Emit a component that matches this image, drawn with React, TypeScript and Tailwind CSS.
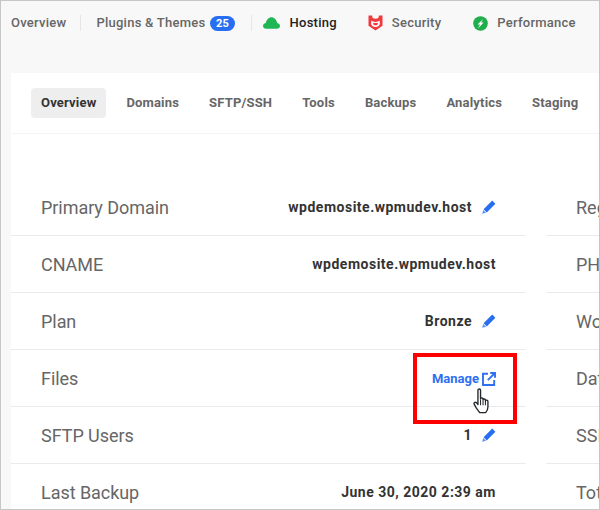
const Pencil = () => (
  <svg viewBox="0 0 14 14" className="ml-[10px] h-[14px] w-[14px] shrink-0">
    <path d="M10.2.6 13.4 3.800 4.800 12.400 1.600 9.200Z" fill="#286ef1" />
    <path d="M1.200 10 4 12.800 .2 13.800Z" fill="#5b8ff5" />
  </svg>
);

const Shield = () => (
  <svg viewBox="0 0 15 16" className="h-[16px] w-[15px] shrink-0">
    <path
      d="M.5.500h3.600l.4 2.300c.8.700 1.800 1 3 1s2.200-.3 3-1L10.900.500h3.600v10.300L7.500 15.500.5 10.800Z"
      fill="#f0383f"
    />
    <path
      d="M3.200 5.500c1.300 1 2.800 1.400 4.300 1.400s3-.4 4.300-1.400v3.600c0 1.500-2 2.900-4.300 2.900s-4.300-1.400-4.300-2.900Z"
      fill="#fff"
    />
    <path d="M5.200 7.800c1.500.4 3.100.4 4.600 0v1.200c0 .7-1 1.300-2.300 1.300s-2.300-.6-2.300-1.300Z" fill="#f0383f" />
  </svg>
);

const Bolt = () => (
  <svg viewBox="0 0 16 16" className="h-[15px] w-[15px] shrink-0">
    <circle cx="8" cy="8" r="7.800" fill="#1fae4b" />
    <path d="M11 2.800 4.800 9.100h2.700l-2.300 4.100L11.300 6.900H8.500Z" fill="#fff" />
  </svg>
);

const Cloud = () => (
  <svg viewBox="0 0 17 12" className="h-[12px] w-[17px] shrink-0">
    <path
      d="M3.200 11.800C1.400 11.800 0 10.600 0 9 0 7.500 1.100 6.300 2.800 6 3.500 2.700 5.700.200 8.500.200s5 2.500 5.700 5.800c1.700.3 2.800 1.500 2.800 3 0 1.600-1.400 2.800-3.200 2.800Z"
      fill="#1fb653"
    />
  </svg>
);

const OpenIcon = () => (
  <svg viewBox="0 0 14 14" fill="none" stroke="#2f6ff0" strokeWidth="1.900" className="ml-[3px] h-[14px] w-[14px] shrink-0">
    <path d="M6 1.800H1v11.200h11.200V8" />
    <path d="M8.300 1h4.700v4.700" />
    <path d="M13 1 5.800 8.200" />
  </svg>
);

const HandCursor = () => (
  <svg viewBox="0 0 17 25" className="h-[26px] w-[18px]">
    <path
      d="M4.600 2.200c0-1.700 2.500-1.700 2.500 0v8.300c0-1.300 2.400-1.300 2.400 0v1c0-1.200 2.300-1.200 2.300 0v1c0-1.100 2.400-1.100 2.400.4v5.300c0 2.600-1.100 4.200-2.200 5.500H6.300c-1-1.400-1.900-2.700-3.200-4.300L1.100 15.800c-.9-1.500.8-2.800 2-1.700l1.500 1.700Z"
      fill="#fff"
      stroke="#22262b"
      strokeWidth="1.300"
      strokeLinejoin="round"
    />
    <path d="M7.100 11v5.500M9.500 12v4.500M11.800 12.500v4" stroke="#22262b" strokeWidth="1" />
  </svg>
);

const tabs = ['Domains', 'SFTP/SSH', 'Tools', 'Backups', 'Analytics', 'Staging'];

const rows = [
  { label: 'Primary Domain', value: 'wpdemosite.wpmudev.host', edit: true, side: 'Region' },
  { label: 'CNAME', value: 'wpdemosite.wpmudev.host', side: 'PHP' },
  { label: 'Plan', value: 'Bronze', edit: true, side: 'WordPress' },
  { label: 'Files', manage: true, side: 'Data' },
  { label: 'SFTP Users', value: '1', edit: true, side: 'SSH' },
  { label: 'Last Backup', value: 'June 30, 2020 2:39 am', side: 'Total' },
];

export default function App() {
  return (
    <div className="relative flex h-[510px] w-[600px] flex-col overflow-hidden border border-[#c6c6c6] bg-[#f8f8f8] font-['Roboto',sans-serif]">
      {/* Top nav */}
      <div className="flex h-[72px] shrink-0 items-start pt-[14px] pl-[10px] text-[13px] font-medium tracking-[0.25px] text-[#666]">
        <div className="flex h-[16px] items-center">
          <span>Overview</span>
          <div className="mr-[15px] ml-[14px] h-[16px] w-px bg-[#e6e6e6]" />
          <span>Plugins &amp; Themes</span>
          <span className="ml-[5px] rounded-full bg-[#286ef1] px-[5.5px] text-[11px] leading-[15px] font-bold text-white">25</span>
          <div className="ml-[16px] h-[16px] w-px bg-[#e6e6e6]" />
          <div className="ml-[11px]"><Cloud /></div>
          <span className="ml-[10px] text-[#222]">Hosting</span>
          <div className="ml-[31px]"><Shield /></div>
          <span className="ml-[9px]">Security</span>
          <div className="ml-[32px]"><Bolt /></div>
          <span className="ml-[9px] whitespace-nowrap">Performance</span>
        </div>
      </div>

      {/* Panel */}
      <div className="ml-[10px] flex-1 bg-white">
        <div className="flex h-[61px] items-center gap-[10px] border-b border-[#f4f4f4] pl-[20px] text-[13px] font-bold tracking-[0.18px] text-[#666]">
          <div className="flex h-[30px] items-center rounded-[4px] bg-[#eee] px-[10px] text-[#333]">Overview</div>
          {tabs.map((tab) => (
            <div key={tab} className="px-[10px] whitespace-nowrap">{tab}</div>
          ))}
        </div>

        <div className="flex flex-col pt-[45px]">
          {rows.map((row, index) => (
            <div key={row.label} className="flex h-[57px] w-[700px] shrink-0">
              <div className={`flex w-[515px] items-center justify-between pr-[30px] pl-[30px] ${index < 5 ? 'border-b border-[#eaeaea]' : ''}`}>
                <span className="text-[18px] tracking-[-0.05px] text-[#666]">{row.label}</span>
                {row.manage ? (
                  <span className="flex items-center pt-[2px] text-[13px] font-bold text-[#2f6ff0]">
                    Manage
                    <OpenIcon />
                  </span>
                ) : (
                  <span className="flex items-center text-[14px] font-bold tracking-[0.5px] text-[#333]">
                    {row.value}
                    {row.edit && <Pencil />}
                  </span>
                )}
              </div>
              <div className={`ml-[20px] flex w-[165px] items-center pl-[30px] ${index < 5 ? 'border-b border-[#eaeaea]' : ''}`}>
                <span className="text-[18px] text-[#666]">{row.side}</span>
              </div>
            </div>
          ))}
        </div>
      </div>

      {/* Red callout and cursor over the Files row */}
      <div className="absolute top-[352px] left-[412px] h-[71px] w-[104px] border-[4px] border-[#f00]" />
      <div className="absolute top-[387px] left-[472px]">
        <HandCursor />
      </div>
    </div>
  );
}
